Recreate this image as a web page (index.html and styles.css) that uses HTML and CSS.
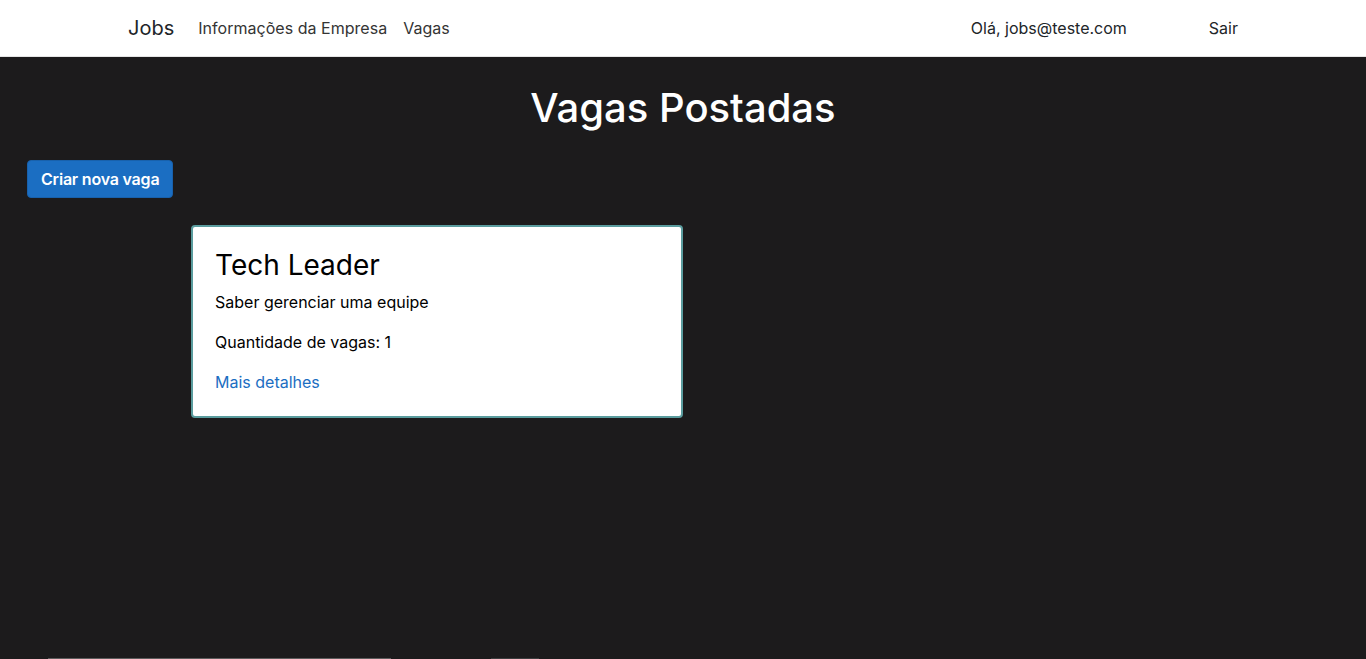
FILE: index.html
```html
<!DOCTYPE html>
<html lang="pt-br">
<head>
<meta charset="utf-8">
<title>Vagas Postadas - Jobs</title>
<link rel="stylesheet" href="styles.css">
</head>
<body>
<header class="navbar">
  <div class="nav-container">
    <a class="brand" href="#">Jobs</a>
    <nav class="nav-left">
      <a class="nav-link" href="#">Informações da Empresa</a>
      <a class="nav-link" href="#">Vagas</a>
    </nav>
    <div class="nav-right">
      <span class="nav-user">Olá, jobs@teste.com</span>
      <a class="nav-logout" href="#">Sair</a>
    </div>
  </div>
</header>
<main class="main">
  <h1 class="page-title">Vagas Postadas</h1>
  <div class="actions">
    <a class="btn-primary" href="#">Criar nova vaga</a>
  </div>
  <div class="cards">
    <div class="card">
      <h3 class="card-title">Tech Leader</h3>
      <p class="card-text">Saber gerenciar uma equipe</p>
      <p class="card-text">Quantidade de vagas: 1</p>
      <p class="card-text last"><a class="card-link" href="#">Mais detalhes</a></p>
    </div>
  </div>
  <div class="footer-peek">
    <div class="peek-input"></div>
    <div class="peek-btn"></div>
  </div>
</main>
</body>
</html>
```
FILE: styles.css
```css
* { box-sizing: border-box; }
html, body { margin: 0; padding: 0; height: 100%; }
body {
  background: #1c1b1c;
  font-family: Inter, "Noto Sans", sans-serif;
  font-size: 16px;
  line-height: 1.5;
  color: #000;
  overflow: hidden;
}
a { text-decoration: none; }

.navbar {
  background: #fff;
  height: 57px;
  border-bottom: 1px solid #e5e5e5;
}
.nav-container {
  width: 1140px;
  margin: 0 auto;
  padding: 0 15px;
  height: 56px;
  display: flex;
  align-items: center;
}
.brand {
  font-size: 20px;
  color: #212529;
  margin-right: 16px;
  line-height: 30px;
}
.nav-left { display: flex; flex: 1; }
.nav-link {
  color: #343434;
  padding: 8px;
  letter-spacing: 0.03px;
}
.nav-right { display: flex; align-items: center; }
.nav-user { color: #212529; margin-right: 1px; }
.nav-logout { color: #212529; margin-left: 81px; }

.main { display: flex; flex-direction: column; }
.page-title {
  margin: 27px 0 0;
  text-align: center;
  color: #fff;
  font-size: 40px;
  font-weight: 500;
  line-height: 1.2;
}
.actions { padding: 28px 0 0 27px; }
.btn-primary {
  display: inline-block;
  background: #1b6ec2;
  border: 1px solid #1861ac;
  color: #fff;
  font-weight: 600;
  letter-spacing: -0.2px;
  padding: 6px 13px;
  border-radius: 4px;
  line-height: 24px;
}
.cards { padding: 27px 0 0 191px; }
.card {
  width: 492px;
  background: #fff;
  border: 2px solid #5a9c9e;
  border-radius: 4px;
  padding: 22px;
}
.card-title {
  margin: 0 0 7px;
  font-size: 28px;
  font-weight: 400;
  line-height: 1.2;
}
.card-text { margin: 0 0 16px; }
.card-text.last { margin-bottom: 0; }
.card-link { color: #1b6ec2; }

.footer-peek {
  margin-top: 240px;
  display: flex;
  align-items: flex-start;
}
.peek-input {
  margin-left: 48px;
  width: 343px;
  height: 30px;
  border-top: 1px solid #5c5c5c;
  background: #232323;
}
.peek-btn {
  margin-left: 100px;
  width: 48px;
  height: 30px;
  background: #3c3d3e;
}
```
